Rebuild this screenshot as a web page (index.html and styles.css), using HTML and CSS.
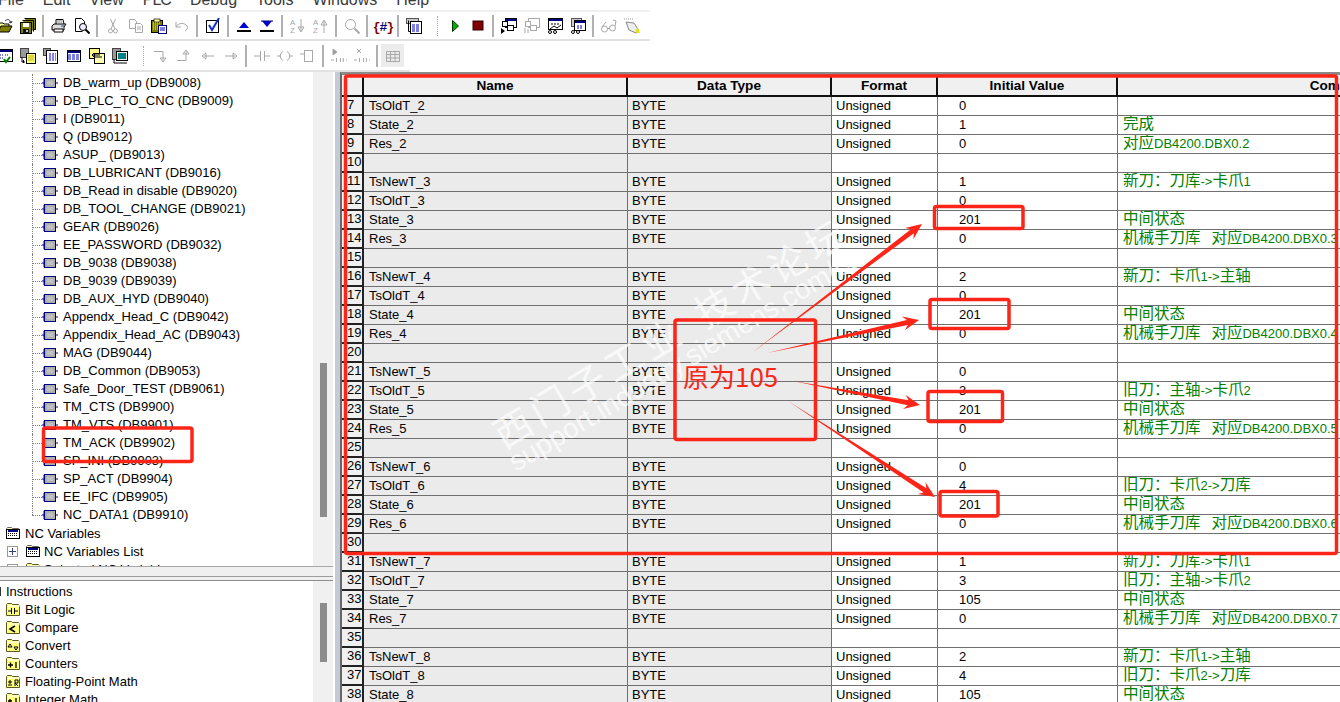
FILE: index.html
```html
<!DOCTYPE html>
<html lang="zh">
<head>
<meta charset="utf-8">
<title>PLC DB</title>
<link rel="stylesheet" href="styles.css">
</head>
<body>
<svg class="defs" xmlns="http://www.w3.org/2000/svg">
  <symbol id="db" viewBox="0 0 16 12">
    <path d="M0 6h3M13 6h3M2 2v8" stroke="#000080" fill="none"/>
    <rect x="2.5" y="1.5" width="11" height="9" fill="#b4b4b4" stroke="#000080"/>
    <rect x="4" y="3" width="8" height="6" fill="#c0c0c0" stroke="#8a8a8a" stroke-width=".5"/>
  </symbol>
  <symbol id="folder" viewBox="0 0 16 14">
    <path d="M1.5 13.5v-11l1-1h4l1 1h6l1 1v10z" fill="#ffff80" stroke="#5a5a20"/>
    <path d="M2 4h13" stroke="#fff"/>
  </symbol>
  <symbol id="dlg" viewBox="0 0 16 14">
    <path d="M1.5 12.5v-10l1-1h4l1 1h6l1 1v9z" fill="#ffff99" stroke="#666"/>
    <rect x="1.5" y="3.5" width="13" height="9" fill="#fff" stroke="#000"/>
    <path d="M3 5h10" stroke="#000080" stroke-width="2"/>
    <path d="M3 7.5h10M3 9.5h10" stroke="#000" stroke-dasharray="1 1"/>
  </symbol>
</svg>

<div class="menu">
  <span>File</span><span>Edit</span><span>View</span><span class="narrow">PLC</span><span>Debug</span><span>Tools</span><span>Windows</span><span>Help</span>
</div>

<div class="tb tb-one">
  <div class="tool first"><svg viewBox="0 0 16 16"><path d="M1 13V5h5l1 1h5v2" fill="#ffff99" stroke="#000"/><path d="M1 14l3-6h11l-3 6z" fill="#808000" stroke="#000"/><path d="M8 3c2-2 4-2 5 0l1 2m-2-1l2 1 1-2" fill="none" stroke="#333"/></svg></div>
  <div class="tool"><svg viewBox="0 0 16 16"><path d="M4.500 .5h11v11h-2M2.500 2.500h11v11" fill="#808000" stroke="#000"/><rect x=".5" y="4.500" width="11" height="11" fill="#808000" stroke="#000"/><rect x="3" y="5" width="6" height="4" fill="#fff"/><rect x="3" y="11" width="6" height="4" fill="#111"/><rect x="6" y="12" width="2" height="2" fill="#ccc"/></svg></div>
  <i class="sep"></i>
  <div class="tool"><svg viewBox="0 0 16 16"><path d="M5 6V1.500h7l1 4.500" fill="#fff" stroke="#000"/><path d="M3 6h12l-2 3v3H1V8z" fill="#ddd" stroke="#000"/><path d="M3 11h9v3H3z" fill="#fff" stroke="#000"/><path d="M10 8h3" stroke="#2040c0"/><path d="M6 3h5M6 5h5" stroke="#888"/></svg></div>
  <div class="tool"><svg viewBox="0 0 16 16"><path d="M1.500 .5h6l3 3v5M1.500 .5v13h7" fill="#fff" stroke="#000"/><circle cx="9" cy="9" r="3.500" fill="#eef" stroke="#000"/><path d="M11.500 11.500l4 4" stroke="#000" stroke-width="2"/></svg></div>
  <i class="sep"></i>
  <div class="tool"><svg viewBox="0 0 16 16" class="off"><circle cx="5.500" cy="13" r="2" /><circle cx="10.500" cy="13" r="2"/><path d="M6 11L10.500 1M10 11L5.500 1"/></svg></div>
  <div class="tool"><svg viewBox="0 0 16 16" class="off"><path d="M1.500 1.500h5l2 2v7h-7z"/><path d="M7.500 5.500h5l2 2v7h-7z" fill="#fff"/><path d="M9 9h4M9 11h4"/></svg></div>
  <div class="tool"><svg viewBox="0 0 16 16"><rect x=".5" y="2.500" width="11" height="12" fill="#808000" stroke="#000"/><rect x="3" y="1" width="6" height="3" fill="#ffff99" stroke="#000" stroke-width=".7"/><path d="M2 5h8M2 7h5M2 9h5M2 11h5" stroke="#ff0" stroke-dasharray="1 1"/><rect x="7.500" y="7.500" width="8" height="8" fill="#fff" stroke="#000080"/><path d="M9 10h5M9 12h5" stroke="#0000c0"/></svg></div>
  <div class="tool"><svg viewBox="0 0 16 16" class="off"><path d="M2 4v5h5M2 9c2-4 8-5 11-1 1 2 0 4-2 5"/></svg></div>
  <i class="sep"></i>
  <div class="tool"><svg viewBox="0 0 16 16"><rect x="1.500" y="2.500" width="12" height="12" fill="#fff" stroke="#000"/><path d="M4 7l3 5 7-12" fill="none" stroke="#1030d0" stroke-width="2"/></svg></div>
  <i class="sep"></i>
  <div class="tool"><svg viewBox="0 0 16 16"><path d="M3 10l5-6 5 6z" fill="#0000d0"/><path d="M1 13h14" stroke="#000" stroke-width="2"/></svg></div>
  <div class="tool"><svg viewBox="0 0 16 16"><path d="M3 3h10l-5 6z" fill="#0000d0"/><path d="M2 3h12" stroke="#000080"/><path d="M1 13h14" stroke="#000" stroke-width="2"/></svg></div>
  <i class="sep"></i>
  <div class="tool"><svg viewBox="0 0 16 16" class="off txt"><text x="0" y="7">A</text><text x="0" y="15">Z</text><path d="M11 1v12M8 9l3 5 3-5z"/></svg></div>
  <div class="tool"><svg viewBox="0 0 16 16" class="off txt"><text x="0" y="7">A</text><text x="0" y="15">Z</text><path d="M11 15V3M8 7l3-5 3 5z"/></svg></div>
  <i class="sep"></i>
  <div class="tool"><svg viewBox="0 0 16 16" class="off"><circle cx="6.500" cy="6.500" r="5"/><path d="M10.500 10.500l5 5" stroke-width="2"/></svg></div>
  <i class="sep"></i>
  <div class="tool"><svg viewBox="0 0 20 16" class="wide"><text class="hash" x="10" y="13">{<tspan class="hash-mid">#</tspan>}</text></svg></div>
  <i class="sep"></i>
  <div class="tool"><svg viewBox="0 0 16 16"><rect x=".5" y=".5" width="12" height="5" fill="#ccc" stroke="#555"/><path d="M2.500 2.500v11h2" fill="#ffffcc" stroke="#000"/><rect x="4.500" y="3.500" width="11" height="12" fill="#fff" stroke="#000"/><path d="M6 7h8M6 9h8M6 11h8M6 13h8" stroke="#0000c0" stroke-dasharray="3 1"/></svg></div>
  <i class="dots one"></i>
  <div class="tool"><svg viewBox="0 0 16 16"><path d="M5.500 2.500l6 5.500-6 5.500z" fill="#00b000" stroke="#003000"/></svg></div>
  <div class="tool"><svg viewBox="0 0 16 16"><rect x="3" y="3" width="10" height="9" fill="#800000" stroke="#300"/></svg></div>
  <i class="sep"></i>
  <div class="tool"><svg viewBox="0 0 16 16"><rect x="4.500" y=".5" width="11" height="9" fill="#fff" stroke="#000"/><path d="M5 2h10" stroke="#000080" stroke-width="2"/><rect x="1.500" y="3.500" width="5" height="5" fill="#fff" stroke="#000"/><rect x="6.500" y="7.500" width="6" height="5" fill="#fff" stroke="#000"/><path d="M0 10l4 3-4 3z" fill="#000"/></svg></div>
  <div class="tool"><svg viewBox="0 0 16 16" class="off"><rect x="4.500" y=".5" width="11" height="9"/><rect x="1.500" y="3.500" width="5" height="5" fill="#fff"/><rect x="6.500" y="7.500" width="6" height="5" fill="#fff"/><path d="M1 10v5M4 11v4"/></svg></div>
  <div class="tool"><svg viewBox="0 0 16 16"><rect x="1.500" y=".5" width="14" height="11" fill="#fff" stroke="#000"/><path d="M2 2h13" stroke="#000080" stroke-width="2"/><path d="M4 6h2M7 6h2M10 6h2M3 11l4-3 3 2 4-3" stroke="#000" fill="none"/><circle cx="3" cy="14" r="1.500" fill="#fff" stroke="#000"/><circle cx="8" cy="14" r="1.500" fill="#fff" stroke="#000"/></svg></div>
  <div class="tool"><svg viewBox="0 0 16 16"><rect x="1.500" y=".5" width="10" height="8" fill="#ccc" stroke="#555"/><rect x="4.500" y="2.500" width="11" height="10" fill="#fff" stroke="#000"/><path d="M5 4h10" stroke="#000080" stroke-width="2"/><path d="M7 8h6M7 10h6" stroke="#0000c0" stroke-dasharray="2 1"/><circle cx="3" cy="14" r="1.500" fill="#fff" stroke="#000"/><circle cx="8" cy="14" r="1.500" fill="#fff" stroke="#000"/></svg></div>
  <i class="sep"></i>
  <div class="tool"><svg viewBox="0 0 16 16" class="off"><circle cx="3.500" cy="11" r="3" fill="#fff"/><circle cx="11.500" cy="10" r="3" fill="#fff"/><path d="M6.500 10.500h2M1 9l4-5M14 8l1-5-3-1"/></svg></div>
  <div class="tool"><svg viewBox="0 0 16 16"><path d="M0 1h9" stroke="#999" stroke-dasharray="1 1"/><path d="M2 4l8 1 5 8-3 2-7-3z" fill="#eee" stroke="#888"/><path d="M12 15l3-2 1 2z" fill="#e8e800"/><path d="M11 12l3-2 1 3-2 2z" fill="#e8e800"/></svg></div>
</div>

<div class="tb tb-two">
  <div class="tool first"><svg viewBox="0 0 16 16"><rect x=".5" y="1.500" width="15" height="12" fill="#fff" stroke="#000"/><path d="M1 3h14" stroke="#000080" stroke-width="2"/><path d="M3 7h3M8 7h3M3 10h3" stroke="#0000c0" stroke-dasharray="1 1"/><path d="M7 11l2 3 4-5" fill="none" stroke="#008000" stroke-width="2"/></svg></div>
  <div class="tool"><svg viewBox="0 0 16 16"><rect x=".5" y=".5" width="8" height="9" fill="#999" stroke="#444"/><path d="M2 9v5h3M3.500 12v3" stroke="#000" fill="none"/><rect x="6.500" y="5.500" width="9" height="10" fill="#ffff80" stroke="#000"/><path d="M8 8h6M8 10h6M8 12h6" stroke="#b0b000"/></svg></div>
  <div class="tool"><svg viewBox="0 0 16 16"><rect x=".5" y=".5" width="7" height="7" fill="#999" stroke="#444"/><rect x="3.500" y="2.500" width="11" height="13" fill="#fff" stroke="#000"/><path d="M6 6h7M6 8h7M6 10h7M6 12h7" stroke="#0000e0" stroke-dasharray="2 1"/></svg></div>
  <div class="tool"><svg viewBox="0 0 16 16"><rect x="1.500" y="2.500" width="13" height="11" fill="#fff" stroke="#000"/><path d="M2 4h12" stroke="#000080" stroke-width="2"/><path d="M2 7h12M2 9h12M2 11h12" stroke="#0000c0" stroke-dasharray="3 1"/></svg></div>
  <div class="tool"><svg viewBox="0 0 16 16"><rect x=".5" y=".5" width="10" height="10" fill="#ffff80" stroke="#000"/><rect x="5.500" y="5.500" width="10" height="10" fill="#ffffb0" stroke="#000"/><path d="M3 7h8M3 7l2-2M3 7l2 2M13 9H6" stroke="#000" fill="none"/></svg></div>
  <div class="tool"><svg viewBox="0 0 16 16"><rect x=".5" y=".5" width="8" height="11" fill="#999" stroke="#444"/><rect x="4.500" y="3.500" width="11" height="9" fill="#eee" stroke="#000"/><rect x="6" y="5" width="8" height="6" fill="#008080"/><path d="M2 11v4h13" stroke="#000" fill="none"/></svg></div>
  <i class="dots two"></i>
  <div class="tool"><svg viewBox="0 0 16 16" class="off"><path d="M0 3.500h9v9M6 10l3 4 3-4z"/></svg></div>
  <div class="tool"><svg viewBox="0 0 16 16" class="off"><path d="M0 12.500h9v-9M6 6l3-4 3 4z"/></svg></div>
  <div class="tool"><svg viewBox="0 0 16 16" class="off"><path d="M14 8H4M6 5L2 8l4 3z"/></svg></div>
  <div class="tool"><svg viewBox="0 0 16 16" class="off"><path d="M2 8h10M10 5l4 3-4 3z"/></svg></div>
  <i class="sep"></i>
  <div class="tool"><svg viewBox="0 0 16 16" class="off"><path d="M0 8h6M6.500 3v10M10.500 3v10M11 8h5"/></svg></div>
  <div class="tool"><svg viewBox="0 0 16 16" class="off"><path d="M0 8h4M12 8h4M6 3.500a5 5 0 0 0 0 9M10 3.500a5 5 0 0 1 0 9"/></svg></div>
  <div class="tool"><svg viewBox="0 0 16 16" class="off"><path d="M0 6h4"/><rect x="4.500" y="2.500" width="8" height="11"/></svg></div>
  <i class="sep"></i>
  <div class="tool"><svg viewBox="0 0 16 16" class="off"><path d="M2 1v6l4-3z" fill="#999"/><path d="M0 12h3M5.500 10v4M9.500 10v4M12 10a4 4 0 0 1 0 4M15 12h1"/></svg></div>
  <div class="tool"><svg viewBox="0 0 16 16" class="off"><path d="M3 1l4 4M7 1L3 5"/><path d="M0 12h3M5.500 10v4M9.500 10v4M12 10a4 4 0 0 1 0 4M15 12h1"/></svg></div>
  <i class="sep"></i>
  <div class="tool pressed"><svg viewBox="0 0 16 16" class="off"><path d="M1.500 3.500h13v10h-13zM1.500 6.500h13M1.500 10h13M5.500 3.500v10M10 3.500v10"/></svg></div>
</div>

<div class="main">
  <div class="side">
    <div class="pane tree-pane">
      <div class="tree">
        <ul class="items">
          <li><svg class="ico"><use href="#db"/></svg>DB_warm_up (DB9008)</li>
          <li><svg class="ico"><use href="#db"/></svg>DB_PLC_TO_CNC (DB9009)</li>
          <li><svg class="ico"><use href="#db"/></svg>I (DB9011)</li>
          <li><svg class="ico"><use href="#db"/></svg>Q (DB9012)</li>
          <li><svg class="ico"><use href="#db"/></svg>ASUP_ (DB9013)</li>
          <li><svg class="ico"><use href="#db"/></svg>DB_LUBRICANT (DB9016)</li>
          <li><svg class="ico"><use href="#db"/></svg>DB_Read in disable (DB9020)</li>
          <li><svg class="ico"><use href="#db"/></svg>DB_TOOL_CHANGE (DB9021)</li>
          <li><svg class="ico"><use href="#db"/></svg>GEAR (DB9026)</li>
          <li><svg class="ico"><use href="#db"/></svg>EE_PASSWORD (DB9032)</li>
          <li><svg class="ico"><use href="#db"/></svg>DB_9038 (DB9038)</li>
          <li><svg class="ico"><use href="#db"/></svg>DB_9039 (DB9039)</li>
          <li><svg class="ico"><use href="#db"/></svg>DB_AUX_HYD (DB9040)</li>
          <li><svg class="ico"><use href="#db"/></svg>Appendx_Head_C (DB9042)</li>
          <li><svg class="ico"><use href="#db"/></svg>Appendix_Head_AC (DB9043)</li>
          <li><svg class="ico"><use href="#db"/></svg>MAG (DB9044)</li>
          <li><svg class="ico"><use href="#db"/></svg>DB_Common (DB9053)</li>
          <li><svg class="ico"><use href="#db"/></svg>Safe_Door_TEST (DB9061)</li>
          <li><svg class="ico"><use href="#db"/></svg>TM_CTS (DB9900)</li>
          <li><svg class="ico"><use href="#db"/></svg>TM_VTS (DB9901)</li>
          <li><svg class="ico"><use href="#db"/></svg>TM_ACK (DB9902)</li>
          <li><svg class="ico"><use href="#db"/></svg>SP_INI (DB9903)</li>
          <li><svg class="ico"><use href="#db"/></svg>SP_ACT (DB9904)</li>
          <li><svg class="ico"><use href="#db"/></svg>EE_IFC (DB9905)</li>
          <li><svg class="ico"><use href="#db"/></svg>NC_DATA1 (DB9910)</li>
        </ul>
        <div class="node lv1"><svg class="fold"><use href="#dlg"/></svg>NC Variables</div>
        <div class="node lv2"><span class="plus"></span><svg class="fold"><use href="#dlg"/></svg>NC Variables List</div>
        <div class="node lv2"><span class="plus"></span><svg class="fold"><use href="#folder"/></svg>Selected NC Variables</div>
      </div>
      <div class="scroll"><div class="thumb thumb-a"></div></div>
    </div>
    <div class="splitter"></div>
    <div class="pane lib-pane">
      <div class="lib">
        <div class="lib-head">Instructions</div>
        <div class="lib-node"><svg class="fold" viewBox="0 0 16 14"><use href="#folder"/><path d="M3 9h3M6.500 6v6M9.500 6v6M10 9h3" stroke="#000" fill="none"/></svg>Bit Logic</div>
        <div class="lib-node"><svg class="fold" viewBox="0 0 16 14"><use href="#folder"/><path d="M10 6L5 9l5 3" stroke="#000" stroke-width="1.500" fill="none"/></svg>Compare</div>
        <div class="lib-node"><svg class="fold" viewBox="0 0 16 14"><use href="#folder"/><path d="M3 9l2-3 2 3zM9 9h4l-2 3z" stroke="#000" fill="none"/></svg>Convert</div>
        <div class="lib-node"><svg class="fold" viewBox="0 0 16 14"><use href="#folder"/><path d="M3 9h5M5.500 6.500v5M11 6v6" stroke="#000" stroke-width="1.300" fill="none"/></svg>Counters</div>
        <div class="lib-node"><svg class="fold" viewBox="0 0 16 14"><use href="#folder"/><path d="M3 8h4M5 6v4M3 11h4M10 6v6M10 6h3v3h-3l3 3" stroke="#000" fill="none"/></svg>Floating-Point Math</div>
        <div class="lib-node"><svg class="fold" viewBox="0 0 16 14"><use href="#folder"/><path d="M3 9h4M5 7v4M11 6v6" stroke="#000" stroke-width="1.300" fill="none"/></svg>Integer Math</div>
      </div>
      <div class="scroll"><div class="thumb thumb-b"></div></div>
    </div>
  </div>
  <div class="gutter"></div>
  <div class="grid">
    <table class="dbt">
      <colgroup><col class="c-n"><col class="c-name"><col class="c-type"><col class="c-fmt"><col class="c-init"><col class="c-com"></colgroup>
      <thead><tr><th></th><th>Name</th><th>Data Type</th><th>Format</th><th>Initial Value</th><th>Comment</th></tr></thead>
      <tbody>
        <tr><td class="n">7</td><td class="g name">TsOldT_2</td><td class="g">BYTE</td><td>Unsigned</td><td class="v">0</td><td class="c"></td></tr>
        <tr><td class="n">8</td><td class="g name">State_2</td><td class="g">BYTE</td><td>Unsigned</td><td class="v">1</td><td class="c"><span class="zh">完成</span></td></tr>
        <tr><td class="n">9</td><td class="g name">Res_2</td><td class="g">BYTE</td><td>Unsigned</td><td class="v">0</td><td class="c"><span class="zh">对应</span>DB4200.DBX0.2</td></tr>
        <tr><td class="n">10</td><td class="g name"></td><td class="g"></td><td></td><td class="v"></td><td class="c"></td></tr>
        <tr><td class="n">11</td><td class="g name">TsNewT_3</td><td class="g">BYTE</td><td>Unsigned</td><td class="v">1</td><td class="c"><span class="zh">新刀：刀库</span>-&gt;<span class="zh">卡爪</span>1</td></tr>
        <tr><td class="n">12</td><td class="g name">TsOldT_3</td><td class="g">BYTE</td><td>Unsigned</td><td class="v">0</td><td class="c"></td></tr>
        <tr><td class="n">13</td><td class="g name">State_3</td><td class="g">BYTE</td><td>Unsigned</td><td class="v">201</td><td class="c"><span class="zh">中间状态</span></td></tr>
        <tr><td class="n">14</td><td class="g name">Res_3</td><td class="g">BYTE</td><td>Unsigned</td><td class="v">0</td><td class="c"><span class="zh">机械手刀库  对应</span>DB4200.DBX0.3</td></tr>
        <tr><td class="n">15</td><td class="g name"></td><td class="g"></td><td></td><td class="v"></td><td class="c"></td></tr>
        <tr><td class="n">16</td><td class="g name">TsNewT_4</td><td class="g">BYTE</td><td>Unsigned</td><td class="v">2</td><td class="c"><span class="zh">新刀：卡爪</span>1-&gt;<span class="zh">主轴</span></td></tr>
        <tr><td class="n">17</td><td class="g name">TsOldT_4</td><td class="g">BYTE</td><td>Unsigned</td><td class="v">0</td><td class="c"></td></tr>
        <tr><td class="n">18</td><td class="g name">State_4</td><td class="g">BYTE</td><td>Unsigned</td><td class="v">201</td><td class="c"><span class="zh">中间状态</span></td></tr>
        <tr><td class="n">19</td><td class="g name">Res_4</td><td class="g">BYTE</td><td>Unsigned</td><td class="v">0</td><td class="c"><span class="zh">机械手刀库  对应</span>DB4200.DBX0.4</td></tr>
        <tr><td class="n">20</td><td class="g name"></td><td class="g"></td><td></td><td class="v"></td><td class="c"></td></tr>
        <tr><td class="n">21</td><td class="g name">TsNewT_5</td><td class="g">BYTE</td><td>Unsigned</td><td class="v">0</td><td class="c"></td></tr>
        <tr><td class="n">22</td><td class="g name">TsOldT_5</td><td class="g">BYTE</td><td>Unsigned</td><td class="v">3</td><td class="c"><span class="zh">旧刀：主轴</span>-&gt;<span class="zh">卡爪</span>2</td></tr>
        <tr><td class="n">23</td><td class="g name">State_5</td><td class="g">BYTE</td><td>Unsigned</td><td class="v">201</td><td class="c"><span class="zh">中间状态</span></td></tr>
        <tr><td class="n">24</td><td class="g name">Res_5</td><td class="g">BYTE</td><td>Unsigned</td><td class="v">0</td><td class="c"><span class="zh">机械手刀库  对应</span>DB4200.DBX0.5</td></tr>
        <tr><td class="n">25</td><td class="g name"></td><td class="g"></td><td></td><td class="v"></td><td class="c"></td></tr>
        <tr><td class="n">26</td><td class="g name">TsNewT_6</td><td class="g">BYTE</td><td>Unsigned</td><td class="v">0</td><td class="c"></td></tr>
        <tr><td class="n">27</td><td class="g name">TsOldT_6</td><td class="g">BYTE</td><td>Unsigned</td><td class="v">4</td><td class="c"><span class="zh">旧刀：卡爪</span>2-&gt;<span class="zh">刀库</span></td></tr>
        <tr><td class="n">28</td><td class="g name">State_6</td><td class="g">BYTE</td><td>Unsigned</td><td class="v">201</td><td class="c"><span class="zh">中间状态</span></td></tr>
        <tr><td class="n">29</td><td class="g name">Res_6</td><td class="g">BYTE</td><td>Unsigned</td><td class="v">0</td><td class="c"><span class="zh">机械手刀库  对应</span>DB4200.DBX0.6</td></tr>
        <tr><td class="n">30</td><td class="g name"></td><td class="g"></td><td></td><td class="v"></td><td class="c"></td></tr>
        <tr><td class="n">31</td><td class="g name">TsNewT_7</td><td class="g">BYTE</td><td>Unsigned</td><td class="v">1</td><td class="c"><span class="zh">新刀：刀库</span>-&gt;<span class="zh">卡爪</span>1</td></tr>
        <tr><td class="n">32</td><td class="g name">TsOldT_7</td><td class="g">BYTE</td><td>Unsigned</td><td class="v">3</td><td class="c"><span class="zh">旧刀：主轴</span>-&gt;<span class="zh">卡爪</span>2</td></tr>
        <tr><td class="n">33</td><td class="g name">State_7</td><td class="g">BYTE</td><td>Unsigned</td><td class="v">105</td><td class="c"><span class="zh">中间状态</span></td></tr>
        <tr><td class="n">34</td><td class="g name">Res_7</td><td class="g">BYTE</td><td>Unsigned</td><td class="v">0</td><td class="c"><span class="zh">机械手刀库  对应</span>DB4200.DBX0.7</td></tr>
        <tr><td class="n">35</td><td class="g name"></td><td class="g"></td><td></td><td class="v"></td><td class="c"></td></tr>
        <tr><td class="n">36</td><td class="g name">TsNewT_8</td><td class="g">BYTE</td><td>Unsigned</td><td class="v">2</td><td class="c"><span class="zh">新刀：卡爪</span>1-&gt;<span class="zh">主轴</span></td></tr>
        <tr><td class="n">37</td><td class="g name">TsOldT_8</td><td class="g">BYTE</td><td>Unsigned</td><td class="v">4</td><td class="c"><span class="zh">旧刀：卡爪</span>2-&gt;<span class="zh">刀库</span></td></tr>
        <tr><td class="n">38</td><td class="g name">State_8</td><td class="g">BYTE</td><td>Unsigned</td><td class="v">105</td><td class="c"><span class="zh">中间状态</span></td></tr>
      </tbody>
    </table>
  </div>
</div>

<svg class="marks" viewBox="0 0 1340 702" xmlns="http://www.w3.org/2000/svg">
  <g class="wm">
    <text class="wm-zh" transform="translate(504 450) rotate(-31)">西门子工业 技术论坛</text>
    <text class="wm-en" transform="translate(516 472) rotate(-31)">support.industry.siemens.com/cs</text>
  </g>
  <g class="boxes">
    <rect x="345.500" y="76" width="991" height="477.500"/>
    <rect x="43.500" y="428" width="148.500" height="33.500"/>
    <rect x="934.500" y="206.500" width="88.500" height="22"/>
    <rect x="930" y="299.500" width="79" height="29"/>
    <rect x="928" y="391.500" width="74.500" height="30"/>
    <rect x="940" y="491.500" width="58" height="24.500"/>
    <rect x="675" y="320" width="140.500" height="119.500"/>
  </g>
  <g class="arrows">
    <polygon points="753,352 910.900,229.200 905,228.100 922,224 913.400,239.300 913.900,233.200"/>
    <polygon points="767,353 906.800,320.100 901.900,316.600 919,320 904.900,330.200 907.800,324.900"/>
    <polygon points="793,381 908.700,400.300 905.600,395.100 920,405 903,408.900 907.700,405.300"/>
    <polygon points="788,401 926.400,488.300 925.400,482.300 935,497 917.800,494.100 923.600,492.500"/>
  </g>
  <text class="note" x="683" y="387">原为105</text>
</svg>
</body>
</html>
```
FILE: styles.css
```css
* { box-sizing: border-box; }
html, body { margin: 0; padding: 0; }
body {
  width: 1340px;
  height: 702px;
  overflow: hidden;
  background: #fff;
  position: relative;
  font-family: "Liberation Sans", "Noto Sans CJK SC", sans-serif;
  font-size: 13px;
  color: #000;
}
.defs { display: none; }

.menu {
  height: 10px;
  overflow: hidden;
  display: flex;
  gap: 19px;
  margin-left: -2px;
  font-size: 16px;
  line-height: 16px;
  color: #3a3a3a;
}
.menu span { margin-top: -8px; }
.menu .narrow { letter-spacing: -1px; }

.tb { display: flex; align-items: center; height: 31px; overflow: hidden; }
.tb-one { width: 650px; border-top: 2px solid #f0f0f0; border-bottom: 2px solid #e2e2e2; }
.tb-two { width: 410px; height: 31px; border-bottom: 2px solid #e2e2e2; }
.tool { width: 23px; height: 23px; flex: none; display: flex; align-items: center; justify-content: center; }
.tool svg { width: 16px; height: 16px; display: block; }
.tool .wide { width: 20px; }
.first { margin-left: -7px; }
.pressed { background: #ececec; }
.off { fill: none; stroke: #a8a8a8; }
.txt text { font: 8px "Liberation Sans", sans-serif; fill: #a8a8a8; stroke: none; }
.hash { font: bold 13px "Liberation Mono", monospace; fill: #800000; text-anchor: middle; letter-spacing: -1px; }
.hash-mid { fill: #000080; }
.sep { flex: none; width: 2px; height: 22px; margin: 0 3px; background: #b0b0b0; }
.dots { flex: none; width: 1px; height: 20px; border-left: 1px dotted #aaa; }
.dots.one { margin: 0 5px 0 12px; }
.dots.two { margin: 0 6px 0 12px; }

.main { display: flex; height: 630px; overflow: hidden; }
.side { width: 333px; flex: none; display: flex; flex-direction: column; }
.pane { display: flex; overflow: hidden; }
.tree-pane { height: 494px; flex: none; }
.lib-pane { flex: 1; min-height: 0; }
.tree, .lib { flex: 1; overflow: hidden; padding-top: 2px; white-space: nowrap; }
.scroll { width: 20px; flex: none; background: #f0f0f0; padding: 0 6px 0 7px; }
.thumb { background: #8c8c8c; }
.thumb-a { height: 154px; margin-top: 291px; }
.thumb-b { height: 59px; margin-top: 22px; }

.items { list-style: none; margin: 0 0 0 32px; padding: 0; }
.items li { height: 18px; line-height: 18px; display: flex; align-items: center; position: relative; padding-left: 10px; }
.items li::before { content: ""; position: absolute; left: 0; top: 0; bottom: 0; border-left: 1px dotted #808080; }
.items li:last-child::before { bottom: 9px; }
.items li::after { content: ""; position: absolute; left: 0; width: 10px; top: 9px; border-top: 1px dotted #808080; }
.ico { width: 16px; height: 12px; margin-right: 5px; flex: none; }
.node { height: 18px; display: flex; align-items: center; }
.fold { width: 16px; height: 14px; flex: none; margin-right: 4px; }
.lv1 { padding-left: 5px; }
.lv2 { padding-left: 7px; }
.lv2 .fold { margin-right: 3px; }
.plus {
  width: 11px; height: 11px; flex: none; margin-right: 7px; border: 1px solid #9a9a9a;
  background: linear-gradient(#304080, #304080) center / 7px 1px no-repeat, linear-gradient(#304080, #304080) center / 1px 7px no-repeat;
}

.splitter { height: 15px; flex: none; background: #f0f0f0; border-top: 1px solid #a8a8a8; border-bottom: 1px solid #8c8c8c; box-shadow: inset 0 -3px 0 #f0f0f0, inset 0 -4px 0 #9c9c9c; }
.lib-head { height: 17px; line-height: 18px; display: flex; align-items: center; gap: 5px; }
.lib-head::before { content: ""; width: 1px; height: 9px; background: #333; }
.lib-node { height: 18px; display: flex; align-items: center; padding-left: 5px; }

.gutter { width: 7px; flex: none; background: linear-gradient(90deg, #fff 0 2px, #c4cad6 2px 100%); }
.grid { flex: 1; min-width: 0; overflow: hidden; background: #f0f0f0; border-left: 2px solid #666; border-top: 3px solid #8a8a8a; }
.dbt { table-layout: fixed; width: 1224px; border-collapse: separate; border-spacing: 0; white-space: pre; }
.c-n { width: 22px; }
.c-name { width: 264px; }
.c-type { width: 204px; }
.c-fmt { width: 106px; }
.c-init { width: 180px; }
.c-com { width: 448px; }
.dbt th { height: 22px; padding: 0; background: #f0f0f0; font-size: 13.6px; font-weight: bold; border-right: 2px solid #111; border-bottom: 2px solid #111; }
.dbt td { height: 19px; padding: 0 0 2px 4px; line-height: 15px; background: #fff; border-right: 1px solid #707070; border-bottom: 1px solid #707070; overflow: hidden; }
.dbt td.n { background: #f0f0f0; padding-left: 5px; border-right: 2px solid #222; border-bottom: 2px solid #222; }
.dbt td.g { background: #ebebeb; }
.dbt td.name { padding-left: 5px; }
.dbt td.v { padding-left: 21px; }
.dbt td.c { padding-left: 5px; color: #008000; }
.zh { font-size: 15.5px; line-height: 0; word-spacing: 2px; font-family: "Noto Sans CJK SC", "Liberation Sans", sans-serif; }

.marks { position: absolute; left: 0; top: 0; width: 1340px; height: 702px; pointer-events: none; }
.wm text { fill: #fff; fill-opacity: .72; font-family: "Noto Sans CJK SC", sans-serif; }
.wm-zh { font-size: 38px; letter-spacing: 5px; word-spacing: 6px; }
.wm .wm-en { font-size: 28px; font-family: "Liberation Sans", sans-serif; }
.boxes rect { fill: none; stroke: #fc2518; stroke-width: 3.500; rx: 2px; }
.arrows polygon { fill: #fc2518; }
.note { fill: #fc2518; font-size: 26px; font-family: "Noto Sans CJK SC", sans-serif; }
```
